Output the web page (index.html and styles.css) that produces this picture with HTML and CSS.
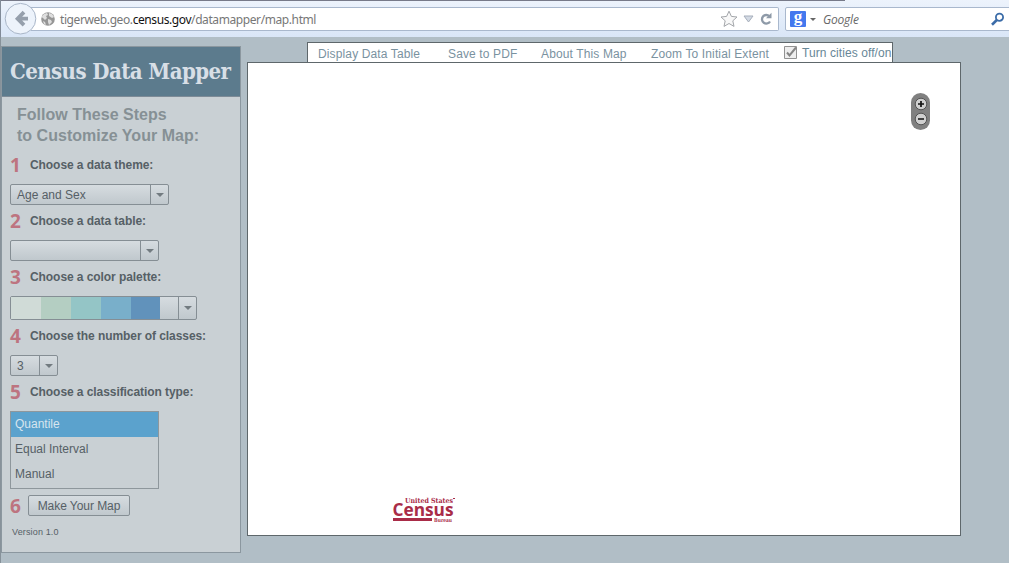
FILE: index.html
```html
<!DOCTYPE html>
<html lang="en">
<head>
<meta charset="utf-8">
<title>Census Data Mapper</title>
<link rel="stylesheet" href="styles.css">
</head>
<body>
<header class="browser">
  <svg class="back" width="34" height="36" viewBox="0 0 34 36"><circle cx="16.5" cy="18.7" r="15.3" fill="#edf3fb" stroke="#a9b6c8"/><path d="M20 12.2 13.6 18.7 20 25.2M14 18.7h10" fill="none" stroke="#959fac" stroke-width="3.8"/></svg>
  <div class="address">
    <svg width="14" height="14" viewBox="0 0 14 14"><circle cx="7" cy="7" r="6.8" fill="#969696"/><path d="M3 2l3-1 1 2-2 1 1 2-2 2-2-2-1.500-1zM8 1l3 1 2 3-2 1-3-2zM7 7l3 1 1 2-3 3-1-3zM2 9l2 1 1 3-2-1z" fill="#dedede"/></svg>
    <span class="url">tigerweb.geo.<b>census.gov</b>/datamapper/map.html</span>
    <svg class="tools" width="56" height="20" viewBox="0 0 56 20"><path d="M11 2.200l2.400 5.200 5.600.6-4.200 3.800 1.200 5.600-5-2.900L6 17.400l1.200-5.600L3 8l5.600-.6z" fill="#f8f8f8" stroke="#a3a6aa"/><path d="M26 7h9l-4.500 6z" fill="#d3dae4" stroke="#a6aebb"/><path d="M51.300 7.200A4.300 4.300 0 1 0 52 12.500" fill="none" stroke="#8e9aa8" stroke-width="2.300"/><path d="M48 9.300h5.500V3.700z" fill="#8e9aa8"/></svg>
  </div>
  <div class="search">
    <span class="google">g</span><span class="small-arrow"></span><i>Google</i>
    <svg width="15" height="15" viewBox="0 0 15 15"><circle cx="9.500" cy="5.200" r="3.600" fill="none" stroke="#3b6ca8" stroke-width="1.800"/><path d="M6.800 8 2 12.700" stroke="#3b6ca8" stroke-width="2.600"/></svg>
  </div>
</header>
<main class="app">
  <aside class="panel">
    <h1 class="title"><span>Census Data Mapper</span></h1>
    <h2 class="intro">Follow These Steps<br>to Customize Your Map:</h2>
    <div class="step"><b class="num">1</b><span>Choose a data theme:</span></div>
    <div class="select theme"><span class="value">Age and Sex</span><span class="drop"></span></div>
    <div class="step"><b class="num">2</b><span>Choose a data table:</span></div>
    <div class="select table"><span class="value"></span><span class="drop"></span></div>
    <div class="step"><b class="num">3</b><span>Choose a color palette:</span></div>
    <div class="select palette"><span class="value"><i class="c1"></i><i class="c2"></i><i class="c3"></i><i class="c4"></i><i class="c5"></i></span><span class="drop"></span></div>
    <div class="step"><b class="num">4</b><span>Choose the number of classes:</span></div>
    <div class="select classes"><span class="value">3</span><span class="drop"></span></div>
    <div class="step"><b class="num">5</b><span>Choose a classification type:</span></div>
    <ul class="list"><li class="selected">Quantile</li><li>Equal Interval</li><li>Manual</li></ul>
    <div class="make"><b class="num">6</b><button class="button" type="button">Make Your Map</button></div>
    <div class="version">Version 1.0</div>
  </aside>
  <section class="workspace">
    <nav class="menu">
      <a class="m1">Display Data Table</a><a class="m2">Save to PDF</a><a class="m3">About This Map</a><a class="m4">Zoom To Initial Extent</a>
      <label class="cities"><svg width="14" height="14" viewBox="0 0 14 14"><path d="M.5.5h12v12H.5z" fill="#eee" stroke="#929292"/><path d="M3 6.500 5.500 9.500 12 1.500" fill="none" stroke="#858585" stroke-width="2"/></svg><span>Turn cities off/on</span></label>
    </nav>
    <div class="map">
      <svg class="zoom" width="19" height="37" viewBox="0 0 19 37"><rect width="19" height="37" rx="9.500" fill="#808080"/><circle cx="10" cy="11" r="5.800" fill="#d0d0d0" stroke="#555"/><circle cx="10" cy="26" r="5.800" fill="#d0d0d0" stroke="#555"/><path d="M7 11h6M10 8v6M7 26h6" stroke="#111" stroke-width="1.700"/></svg>
      <svg class="logo" width="70" height="34" viewBox="0 0 70 34"><g fill="#a92c48"><text class="logo-top" x="14" y="7.500" textLength="48" lengthAdjust="spacingAndGlyphs">United States</text><text class="logo-main" x="1.500" y="20.500" textLength="61" lengthAdjust="spacingAndGlyphs">Census</text><text class="logo-sub" x="43" y="27" textLength="18" lengthAdjust="spacingAndGlyphs">Bureau</text><path d="M2 23h39v3H2zM62 3h2v1h-2z"/></g></svg>
    </div>
  </section>
</main>
</body>
</html>
```
FILE: styles.css
```css
* { box-sizing: border-box; }
body { margin: 0; width: 1009px; height: 563px; overflow: hidden; background: #b1bec6; font-family: "Liberation Sans", Arial, sans-serif; font-size: 12px; color: #566066; }
.browser { height: 37px; display: flex; position: relative; padding: 7px 0 0 33px; background: linear-gradient(#edf3fc, #d9e6f7); border-left: 1px solid #818b98; }
.browser::before { content: ""; position: absolute; left: 0; top: 0; width: 844px; height: 1px; background: #777a89; }
.back { position: absolute; left: 3px; top: 0; }
.address { width: 748px; flex: none; height: 24px; margin-left: -3px; padding-left: 10px; display: flex; align-items: center; background: #fff; border: 1px solid #a9b8cd; border-left: 0; border-radius: 0 2px 2px 0; }
.url { font-family: "Noto Sans", sans-serif; font-size: 12px; color: #777; margin-left: 5px; white-space: nowrap; letter-spacing: -.41px; }
.url b { font-weight: 400; color: #111; }
.tools { margin-left: auto; margin-right: 4px; }
.search { width: 240px; height: 24px; flex: none; margin-left: 6px; padding-left: 4px; display: flex; align-items: center; background: #fff; border: 1px solid #a9b8cd; border-radius: 2px; }
.google { width: 16px; height: 16px; background: #4478ee; color: #fff; font: 700 17px/12px "Liberation Serif", serif; text-align: center; border-radius: 1px; }
.small-arrow { border: 3px solid transparent; border-top-color: #666; border-bottom: 0; margin: 0 7px 0 4px; }
.search i { font-family: "Open Sans", sans-serif; color: #686868; letter-spacing: -.2px; }
.search svg { margin-left: auto; margin-right: 19px; }

.app { display: flex; align-items: flex-start; height: 526px; border-left: 1px solid #87929a; }
.panel { width: 240px; height: 507px; margin-top: 9px; background: #c9d0d4; border: 1px solid #8b979f; flex: none; }
.title { height: 50px; margin: 0; padding-left: 8px; background: #5c7b8d; border-bottom: 1px solid #7d8b97; color: #d8dfe6; font: 700 22px/49px "DejaVu Serif Condensed", "DejaVu Serif", serif; font-stretch: condensed; white-space: nowrap; }
.title span { letter-spacing: -.57px; }
.intro { margin: 0; padding: 7px 0 0 15px; height: 52px; font-size: 16px; line-height: 21px; color: #869095; white-space: nowrap; letter-spacing: .02px; }
.step { height: 35px; display: flex; padding-left: 8px; line-height: 32px; font-weight: 700; white-space: nowrap; letter-spacing: -.07px; }
.num { width: 20px; flex: none; color: #bd7480; font: 700 19px/32px "Open Sans", sans-serif; }
.select { height: 21px; margin-left: 8px; display: flex; border: 1px solid #858e94; border-radius: 2px; background: linear-gradient(#d6dce0, #c0c8cd); }
.value { flex: 1; display: flex; padding-left: 6px; line-height: 20px; }
.drop { width: 18px; border-left: 1px solid #858e94; display: flex; align-items: center; justify-content: center; }
.drop::before { content: ""; border: 4px solid transparent; border-top-color: #727b80; border-bottom: 0; }
.theme { width: 159px; }
.table { width: 149px; }
.palette { width: 187px; height: 24px; }
.palette .value { padding: 0; }
.palette i { width: 30px; }
.palette .c5 { width: 29px; }
.c1 { background: #d0dbd7; } .c2 { background: #b4cec2; } .c3 { background: #94c5c6; } .c4 { background: #79afca; } .c5 { background: #6192bb; }
.classes { width: 48px; }
.list { list-style: none; margin: 0 0 0 8px; padding: 0; width: 149px; height: 78px; border: 1px solid #8e979c; }
.list li { height: 25px; line-height: 25px; padding-left: 4px; }
.list .selected { background: #5ba2cd; color: #d7e5ef; }
.make { height: 33px; display: flex; align-items: center; padding-left: 8px; }
.make .num { width: 18px; }
.button { width: 102px; height: 21px; padding: 0; color: #566066; font: 12px "Liberation Sans", Arial, sans-serif; letter-spacing: -.05px; border: 1px solid #858e94; border-radius: 2px; background: linear-gradient(#d6dce0, #c0c8cd); white-space: nowrap; }
.version { padding: 4px 0 0 10px; font-size: 9px; line-height: 12px; letter-spacing: .15px; }

.workspace { margin: 5px 0 0 6px; width: 714px; }
.menu { width: 586px; height: 21px; margin: 0 0 -1px 60px; padding-left: 10px; display: flex; align-items: center; background: #fff; border: 1px solid #5e676b; color: #7a929f; white-space: nowrap; }
.menu a { padding-top: 2px; flex: none; letter-spacing: .13px; }
.m1 { width: 130px; } .m2 { width: 93px; } .m3 { width: 110px; } .m4 { width: 133px; }
.cities { display: flex; align-items: center; color: #688797; letter-spacing: .08px; }
.cities span { margin-left: 4px; }
.map { height: 474px; position: relative; background: #fff; border: 1px solid #5e676b; }
.zoom { position: absolute; left: 663px; top: 30px; }
.logo { position: absolute; left: 143px; top: 432px; overflow: visible; }
.logo-top { font: 700 7px "DejaVu Serif", serif; }
.logo-main { font: 700 18px "Open Sans", sans-serif; }
.logo-sub { font: 700 5.500px "DejaVu Serif", serif; }
```
